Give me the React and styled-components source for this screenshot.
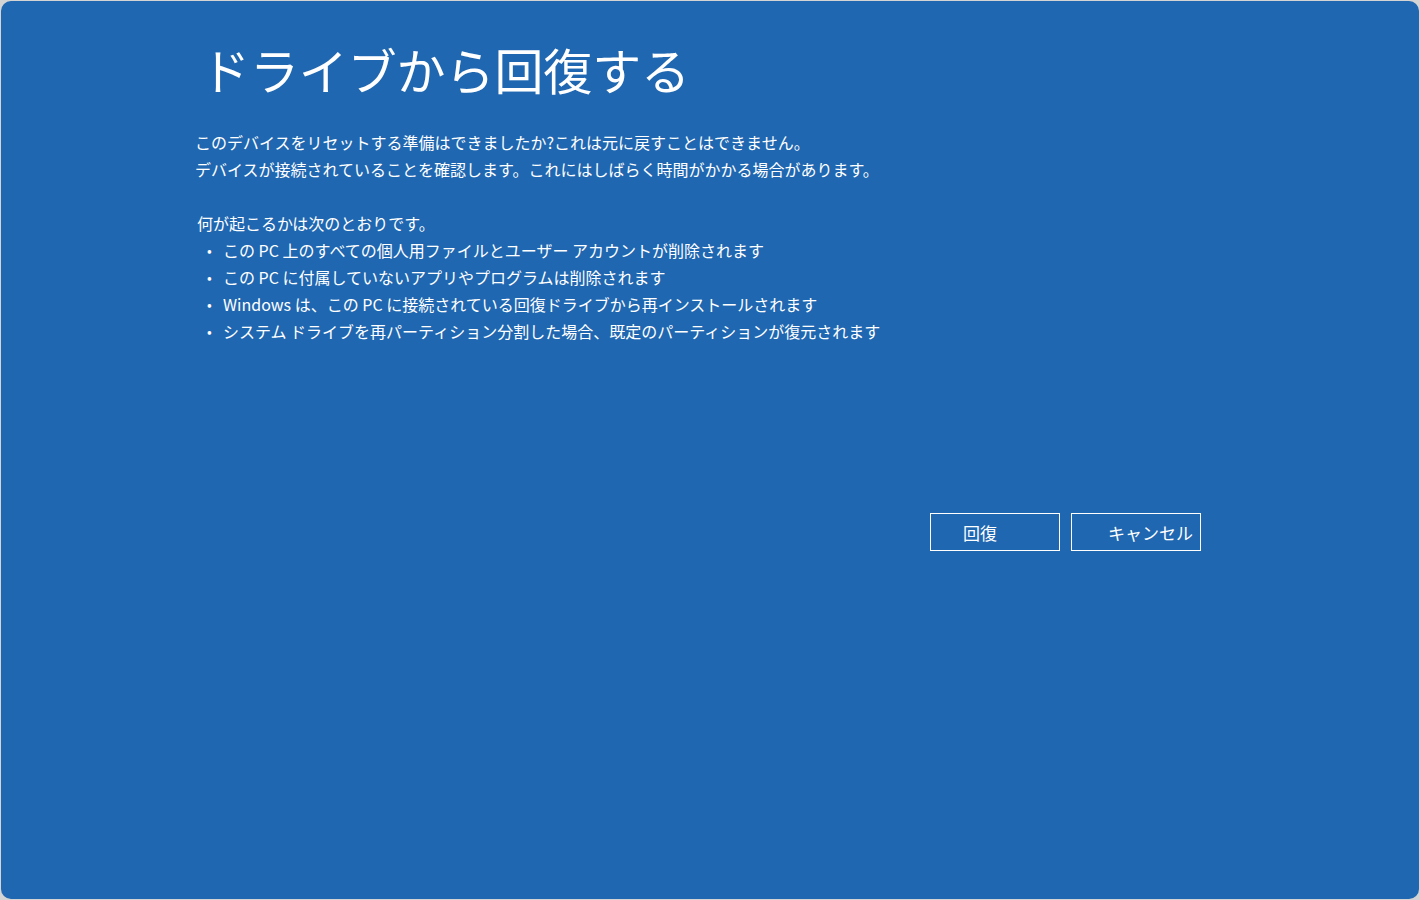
import styled, { createGlobalStyle } from "styled-components";

const GlobalStyle = createGlobalStyle`
  html, body {
    margin: 0;
    padding: 0;
    background: #d4d4d4;
  }
  body {
    font-family: "Noto Sans CJK JP", "Noto Sans", sans-serif;
  }
`;

const Screen = styled.div`
  box-sizing: border-box;
  width: 1418px;
  height: 898px;
  margin: 1px;
  border-radius: 10px;
  background: #1f67b1;
  color: #ffffff;
  padding: 34px 218px 0 194px;
  display: flex;
  flex-direction: column;
`;

const Title = styled.h1`
  margin: 0 0 0 6px;
  font-size: 49px;
  font-weight: 400;
  line-height: 68px;
  letter-spacing: -0.1px;
`;

const Text = styled.div`
  margin-top: 26px;
  font-size: 16px;
  line-height: 27px;
`;

const Line = styled.p`
  margin: 0;
  padding-left: ${(p) => p.$indent || 0}px;
  min-height: 27px;
`;

const List = styled.ul`
  margin: 0;
  padding: 0 0 0 12px;
  list-style: none;
`;

const Item = styled.li`
  display: flex;
  gap: 8px;
  &::before {
    content: "•";
    width: 8px;
    font-size: 14px;
  }
`;

const Actions = styled.div`
  margin-top: 168px;
  display: flex;
  justify-content: flex-end;
  gap: 11px;
`;

const Button = styled.button`
  box-sizing: border-box;
  width: 130px;
  height: 38px;
  background: transparent;
  border: 1px solid #ffffff;
  color: #ffffff;
  font-family: "Noto Sans CJK JP", sans-serif;
  font-size: 17px;
  text-align: left;
  padding: 0 0 0 ${(p) => p.$pad}px;
  cursor: pointer;
`;

const items = [
  "この PC 上のすべての個人用ファイルとユーザー アカウントが削除されます",
  "この PC に付属していないアプリやプログラムは削除されます",
  "Windows は、この PC に接続されている回復ドライブから再インストールされます",
  "システム ドライブを再パーティション分割した場合、既定のパーティションが復元されます",
];

export default function App() {
  return (
    <>
      <GlobalStyle />
      <Screen>
        <Title>ドライブから回復する</Title>
        <Text>
          <Line>このデバイスをリセットする準備はできましたか?これは元に戻すことはできません。</Line>
          <Line>デバイスが接続されていることを確認します。これにはしばらく時間がかかる場合があります。</Line>
          <Line />
          <Line $indent={2}>何が起こるかは次のとおりです。</Line>
          <List>
            {items.map((t) => (
              <Item key={t}>{t}</Item>
            ))}
          </List>
        </Text>
        <Actions>
          <Button $pad={32}>回復</Button>
          <Button $pad={36}>キャンセル</Button>
        </Actions>
      </Screen>
    </>
  );
}
